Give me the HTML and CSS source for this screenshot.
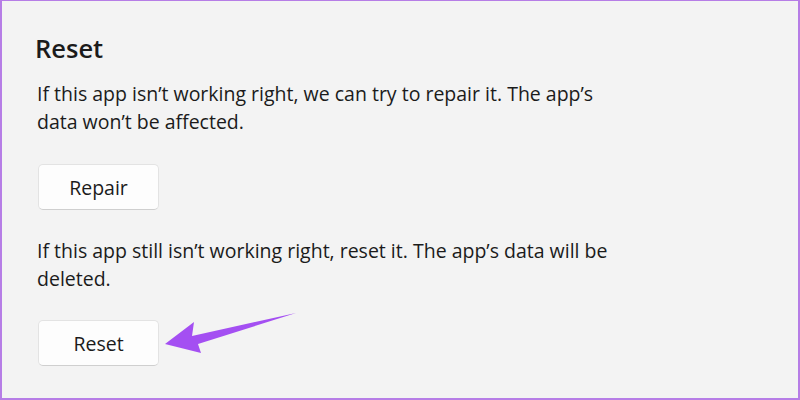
FILE: index.html
```html
<!DOCTYPE html>
<html>
<head>
<meta charset="utf-8">
<link rel="stylesheet" href="styles.css">
</head>
<body>
<div class="frame">
  <h1 class="title">Reset</h1>
  <p class="desc">If this app isn’t working right, we can try to repair it. The app’s<br>data won’t be affected.</p>
  <button class="btn">Repair</button>
  <p class="desc desc2">If this app still isn’t working right, reset it. The app’s data will be<br>deleted.</p>
  <button class="btn">Reset</button>
  <svg class="arrow" width="800" height="400" viewBox="0 0 800 400">
    <polygon points="165,344 194,322 192,336 296,313 198,344 201,353" fill="#a44ff2"/>
  </svg>
</div>
</body>
</html>
```
FILE: styles.css
```css
* { box-sizing: border-box; }
html, body { margin: 0; padding: 0; }
body { width: 800px; height: 400px; background: #f3f3f3; overflow: hidden; }
.frame {
  position: relative;
  width: 800px;
  height: 400px;
  border-style: solid;
  border-color: #b67de6;
  border-width: 1px 2px 2px 2px;
  padding: 31px 0 0 33px;
  font-family: "Open Sans", "Noto Sans", sans-serif;
  color: #1b1b1b;
  display: flex;
  flex-direction: column;
  align-items: flex-start;
}
.title {
  margin: 0 0 16px 0;
  font-size: 25.5px;
  line-height: 32px;
  font-weight: 600;
}
.desc {
  margin: 0 0 28px 2px;
  font-size: 19.5px;
  line-height: 28px;
}
.desc2 { margin-top: 27px; margin-bottom: 27px; }
.btn {
  margin-left: 3px;
  width: 121px;
  height: 46px;
  background: #fdfdfd;
  border: 1px solid #e3e3e3;
  border-bottom-color: #cfcfcf;
  border-radius: 5px;
  font-family: inherit;
  font-size: 19.5px;
  color: #1b1b1b;
  padding: 0;
}
.arrow {
  position: absolute;
  left: -2px;
  top: -1px;
  pointer-events: none;
}
```
